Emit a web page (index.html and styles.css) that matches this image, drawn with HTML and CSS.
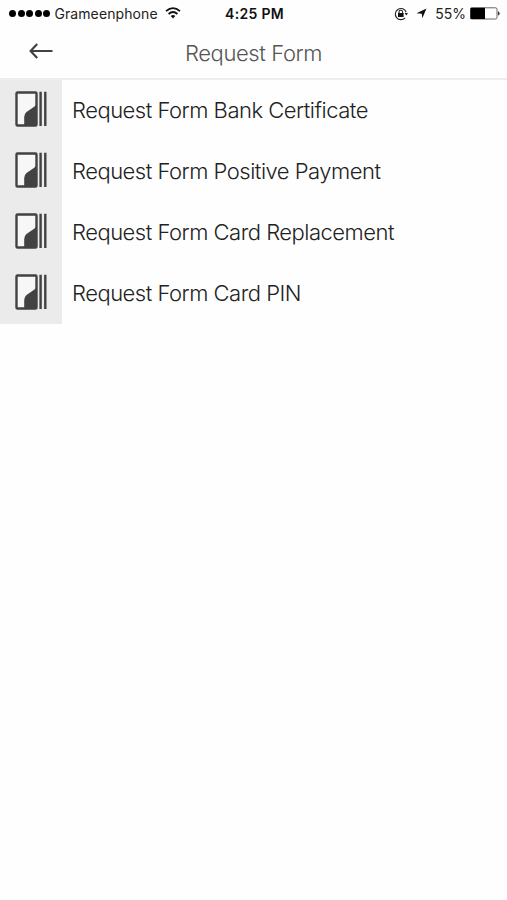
FILE: index.html
```html
<!DOCTYPE html>
<html lang="en">
<head>
<meta charset="utf-8">
<title>Request Form</title>
<link rel="stylesheet" href="styles.css">
</head>
<body>
<svg class="defs" width="0" height="0" aria-hidden="true">
  <symbol id="form-icon" viewBox="0 0 32 36">
    <rect x="1.5" y="1.5" width="20" height="33" rx="1" fill="#f7f7f7" stroke="#424242" stroke-width="2.4"/>
    <path d="M21.5 13.5 L19.5 15.5 L11.5 21 Q9.2 23 9.2 26 V34.5 H21.5Z" fill="#424242"/>
    <path d="M25.6 .8V35M30.3 .8V35" stroke="#424242" stroke-width="2.4"/>
  </symbol>
</svg>
<header class="status">
  <div class="carrier">
    <div class="signal"><i></i><i></i><i></i><i></i><i></i></div>
    <span class="carrier-name">Grameenphone</span>
    <svg class="wifi" width="16" height="12" viewBox="0 0 16 12" fill="none" stroke="#111" stroke-width="1.8">
      <path d="M1 4.2Q8-2 15 4.2M3.6 7Q8 3 12.4 7"/>
      <path d="M5.7 9Q8 6.9 10.3 9L8 11.5Z" fill="#111" stroke="none"/>
    </svg>
  </div>
  <span class="time">4:25 PM</span>
  <div class="indicators">
    <svg class="lock" width="14" height="14" viewBox="0 0 14 14" fill="none" stroke="#222">
      <path d="M11.1 10.8A5.6 5.6 0 1 1 12.2 5.2" stroke-width="1.1"/>
      <path d="M10.6 6H14L12.3 8.6Z" fill="#222" stroke="none"/>
      <path d="M5 6.5V5A1.8 1.8 0 0 1 8.6 5V6.5" stroke-width="1.1"/>
      <rect x="4" y="6" width="5.6" height="4" fill="#111" stroke="none"/>
    </svg>
    <svg class="location" width="11" height="11" viewBox="0 0 11 11"><path d="M10.5.5L6.3 10.3L5.8 5.8L.5 5.3Z" fill="#111"/></svg>
    <span class="percent">55%</span>
    <svg class="battery" width="30" height="13" viewBox="0 0 30 13">
      <rect x=".5" y=".8" width="26.5" height="11.2" rx="1.5" fill="#fff" stroke="#555" stroke-width=".9"/>
      <path d="M.5 .8H15V12H.5Z" fill="#000"/>
      <path d="M28 4.2Q29.6 4.6 29.6 6.4T28 8.6Z" fill="#333"/>
    </svg>
  </div>
</header>
<nav class="bar">
  <svg class="back" width="24" height="16" viewBox="0 0 24 16" fill="none" stroke="#424242" stroke-width="2.2"><path d="M8.2 1L1.6 8L8.2 15M2 8H23.5"/></svg>
  <h1 class="title">Request Form</h1>
</nav>
<main class="list">
  <div class="row"><div class="thumb"><svg width="32" height="36"><use href="#form-icon"/></svg></div><span class="label bank">Request Form Bank Certificate</span></div>
  <div class="row"><div class="thumb"><svg width="32" height="36"><use href="#form-icon"/></svg></div><span class="label">Request Form Positive Payment</span></div>
  <div class="row"><div class="thumb"><svg width="32" height="36"><use href="#form-icon"/></svg></div><span class="label">Request Form Card Replacement</span></div>
  <div class="row"><div class="thumb"><svg width="32" height="36"><use href="#form-icon"/></svg></div><span class="label">Request Form Card PIN</span></div>
</main>
</body>
</html>
```
FILE: styles.css
```css
* { box-sizing: border-box; }
body { margin: 0; background: #fefefe; font-family: Inter, "Liberation Sans", sans-serif; color: #222; }
.defs { display: block; }
.status { display: grid; grid-template-columns: 1fr auto 1fr; align-items: center; height: 27px; padding: 0 7px 0 9px; font-size: 14px; line-height: 27px; }
.carrier { display: flex; align-items: center; }
.signal { display: flex; gap: 1.6px; margin-right: 4px; }
.signal i { width: 7px; height: 7px; border-radius: 50%; background: #000; }
.carrier-name { letter-spacing: .1px; }
.wifi { margin: -2px 0 0 7px; }
.time { font-weight: 600; letter-spacing: .3px; color: #111; }
.indicators { display: flex; align-items: center; justify-content: flex-end; }
.lock { margin-right: 8px; }
.location { margin-right: 8px; }
.percent { margin-right: 4px; }
.bar { display: grid; grid-template-columns: 62px 1fr 62px; align-items: center; height: 53px; border-bottom: 2px solid #ededed; }
.back { margin-left: 29px; margin-top: -3px; }
.title { margin: 0; text-align: center; font-size: 22px; font-weight: 300; letter-spacing: -.4px; color: #555; }
.row { display: flex; height: 61px; }
.thumb { display: flex; width: 62px; align-items: center; justify-content: center; padding-bottom: 4px; background: #ebebeb; }
.label { padding-left: 10px; font-size: 22px; line-height: 60px; font-weight: 300; letter-spacing: -.5px; white-space: nowrap; }
```
